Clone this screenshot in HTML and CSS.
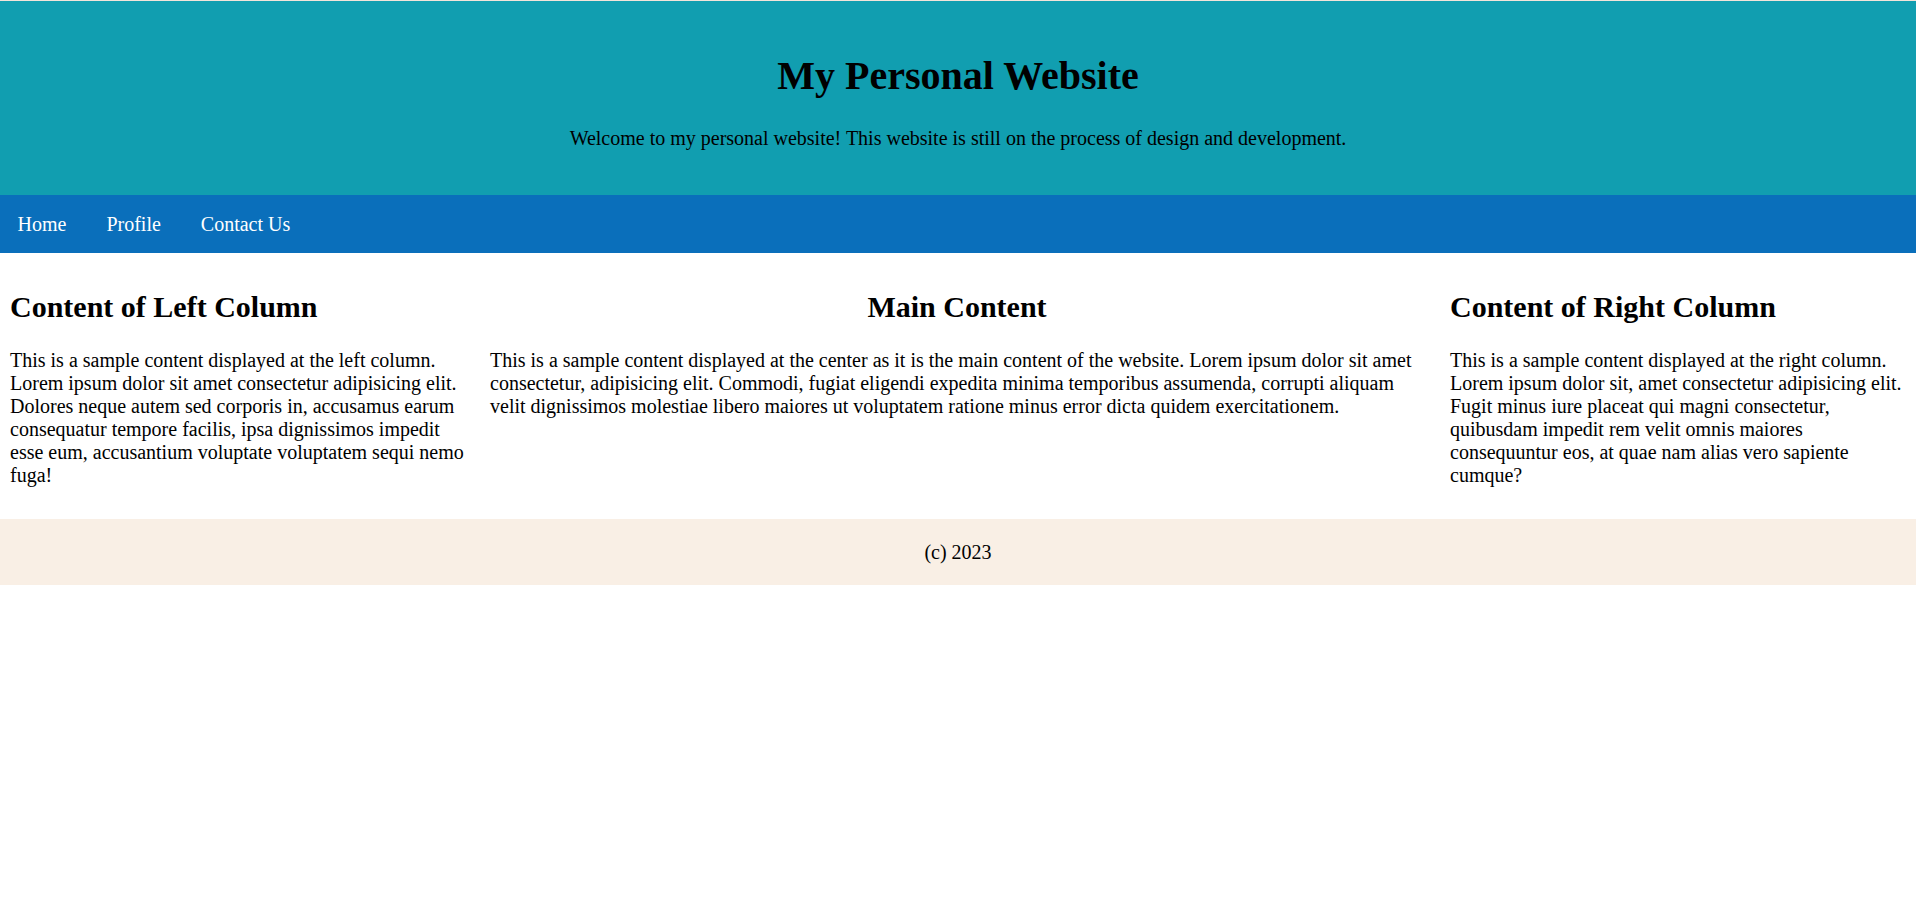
FILE: index.html
```html
<!DOCTYPE html>
<html lang="en">
<head>
<meta charset="utf-8">
<title>My Personal Website</title>
<link rel="stylesheet" href="styles.css">
</head>
<body>
<header class="site-header">
  <h1 class="site-title">My Personal Website</h1>
  <p class="site-tagline">Welcome to my personal website! This website is still on the process of design and development.</p>
</header>
<nav class="site-nav">
  <a class="nav-link" href="#">Home</a>
  <a class="nav-link" href="#">Profile</a>
  <a class="nav-link" href="#">Contact Us</a>
</nav>
<main class="columns">
  <section class="col col-side">
    <h2 class="col-title">Content of Left Column</h2>
    <p class="col-text">This is a sample content displayed at the left column. Lorem ipsum dolor sit amet consectetur adipisicing elit. Dolores neque autem sed corporis in, accusamus earum consequatur tempore facilis, ipsa dignissimos impedit esse eum, accusantium voluptate voluptatem sequi nemo fuga!</p>
  </section>
  <section class="col col-main">
    <h2 class="col-title col-title-center">Main Content</h2>
    <p class="col-text">This is a sample content displayed at the center as it is the main content of the website. Lorem ipsum dolor sit amet consectetur, adipisicing elit. Commodi, fugiat eligendi expedita minima temporibus assumenda, corrupti aliquam velit dignissimos molestiae libero maiores ut voluptatem ratione minus error dicta quidem exercitationem.</p>
  </section>
  <section class="col col-side">
    <h2 class="col-title">Content of Right Column</h2>
    <p class="col-text">This is a sample content displayed at the right column. Lorem ipsum dolor sit, amet consectetur adipisicing elit. Fugit minus iure placeat qui magni consectetur, quibusdam impedit rem velit omnis maiores consequuntur eos, at quae nam alias vero sapiente cumque?</p>
  </section>
</main>
<footer class="site-footer">
  <p class="footer-text">(c) 2023</p>
</footer>
</body>
</html>
```

FILE: styles.css
```css
html, body {
  margin: 0;
  padding: 0;
  background: #ffffff;
}

body {
  font-family: "Liberation Serif", "Times New Roman", serif;
  font-size: 20px;
  line-height: 23px;
  color: #000000;
}

.site-header {
  background: #119eb0;
  border-top: 1px solid #f3e4da;
  padding: 25px 0 25px;
  text-align: center;
}

.site-title {
  font-size: 40px;
  line-height: 46px;
  font-weight: bold;
  margin: 27px 0 28px;
}

.site-tagline {
  margin: 20px 0;
}

.site-nav {
  background: #0a6fbb;
  display: flex;
  gap: 5px;
}

.nav-link {
  display: block;
  color: #ffffff;
  text-decoration: none;
  padding: 17.5px 17.5px;
}

.columns {
  display: grid;
  grid-template-columns: 480px 1fr 476px;
}

.col {
  padding: 11px 10px 12px;
}

.col-main {
  padding-right: 16px;
}

.col-title {
  font-size: 30px;
  line-height: 35px;
  font-weight: bold;
  margin: 25px 0;
}

.col-title-center {
  text-align: center;
}

.col-text {
  margin: 20px 0;
}

.site-footer {
  background: #f9efe5;
  text-align: center;
  padding: 21.5px 0;
}

.footer-text {
  margin: 0;
}
```
